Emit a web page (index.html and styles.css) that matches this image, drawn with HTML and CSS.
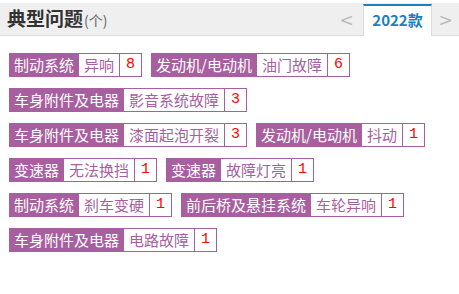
FILE: index.html
```html
<!DOCTYPE html>
<html lang="zh-CN">
<head>
    <meta charset="UTF-8">
    <title>典型问题</title>
    <link rel="stylesheet" href="styles.css">
</head>
<body>
    <div class="panel">
        <div class="panel-head">
            <h3 class="title">典型问题<span class="unit">(个)</span></h3>
            <div class="tabs">
                <span class="arrow">&lt;</span>
                <span class="tab active">2022款</span>
                <span class="arrow">&gt;</span>
            </div>
        </div>
        <div class="issues">
            <div class="issue"><span class="cat">制动系统</span><span class="name">异响</span><span class="num">8</span></div>
            <div class="issue"><span class="cat">发动机/电动机</span><span class="name">油门故障</span><span class="num">6</span></div>
            <div class="issue"><span class="cat">车身附件及电器</span><span class="name">影音系统故障</span><span class="num">3</span></div>
            <div class="issue"><span class="cat">车身附件及电器</span><span class="name">漆面起泡开裂</span><span class="num">3</span></div>
            <div class="issue"><span class="cat">发动机/电动机</span><span class="name">抖动</span><span class="num">1</span></div>
            <div class="issue"><span class="cat">变速器</span><span class="name">无法换挡</span><span class="num">1</span></div>
            <div class="issue"><span class="cat">变速器</span><span class="name">故障灯亮</span><span class="num">1</span></div>
            <div class="issue"><span class="cat">制动系统</span><span class="name">刹车变硬</span><span class="num">1</span></div>
            <div class="issue"><span class="cat">前后桥及悬挂系统</span><span class="name">车轮异响</span><span class="num">1</span></div>
            <div class="issue"><span class="cat">车身附件及电器</span><span class="name">电路故障</span><span class="num">1</span></div>
        </div>
    </div>
</body>
</html>
```

FILE: styles.css
```css
* {
    margin: 0;
    padding: 0;
    box-sizing: border-box;
}

body {
    background: #fff;
    font-family: 'Noto Sans CJK SC', 'Liberation Sans', sans-serif;
    font-size: 15px;
    color: #333;
}

.panel {
    width: 459px;
    padding-top: 3px;
}

.panel-head {
    display: flex;
    justify-content: space-between;
    align-items: flex-end;
    height: 33px;
    background: #efefef;
    border-bottom: 1px solid #dcdcdc;
}

.title {
    align-self: center;
    padding-left: 7px;
    font-size: 19px;
    font-weight: bold;
    color: #333;
    line-height: 32px;
}

.unit {
    font-size: 14px;
    font-weight: normal;
    color: #666;
    margin-left: 1px;
}

.tabs {
    display: flex;
    align-items: flex-end;
    margin-bottom: -1px;
}

.arrow {
    width: 33px;
    height: 31px;
    line-height: 30px;
    text-align: center;
    font-family: 'DejaVu Sans', sans-serif;
    font-size: 17px;
    color: #bbb;
}

.tabs .arrow:last-child {
    width: 27px;
}

.tab {
    width: 69px;
    height: 32px;
    line-height: 28px;
    text-align: center;
    background: #fff;
    border-top: 2px solid #1a7fc2;
    border-left: 1px solid #dcdcdc;
    border-right: 1px solid #dcdcdc;
    font-size: 15px;
    font-weight: bold;
    color: #1a7fc2;
}

.issues {
    display: flex;
    flex-wrap: wrap;
    padding: 17px 0 0 9px;
    width: 450px;
}

.issue {
    display: flex;
    height: 24px;
    margin: 0 9px 11px 0;
    line-height: 22px;
}

.cat {
    background: #a75f9f;
    color: #fff;
    padding: 0 5px;
    line-height: 24px;
}

.name,
.num {
    border: 1px solid #a75f9f;
    border-left: none;
    background: #fff;
}

.name {
    color: #a75f9f;
    padding: 0 5px;
}

.num {
    color: #f00;
    padding: 0 6px;
    font-family: 'Liberation Mono', monospace;
}
```
